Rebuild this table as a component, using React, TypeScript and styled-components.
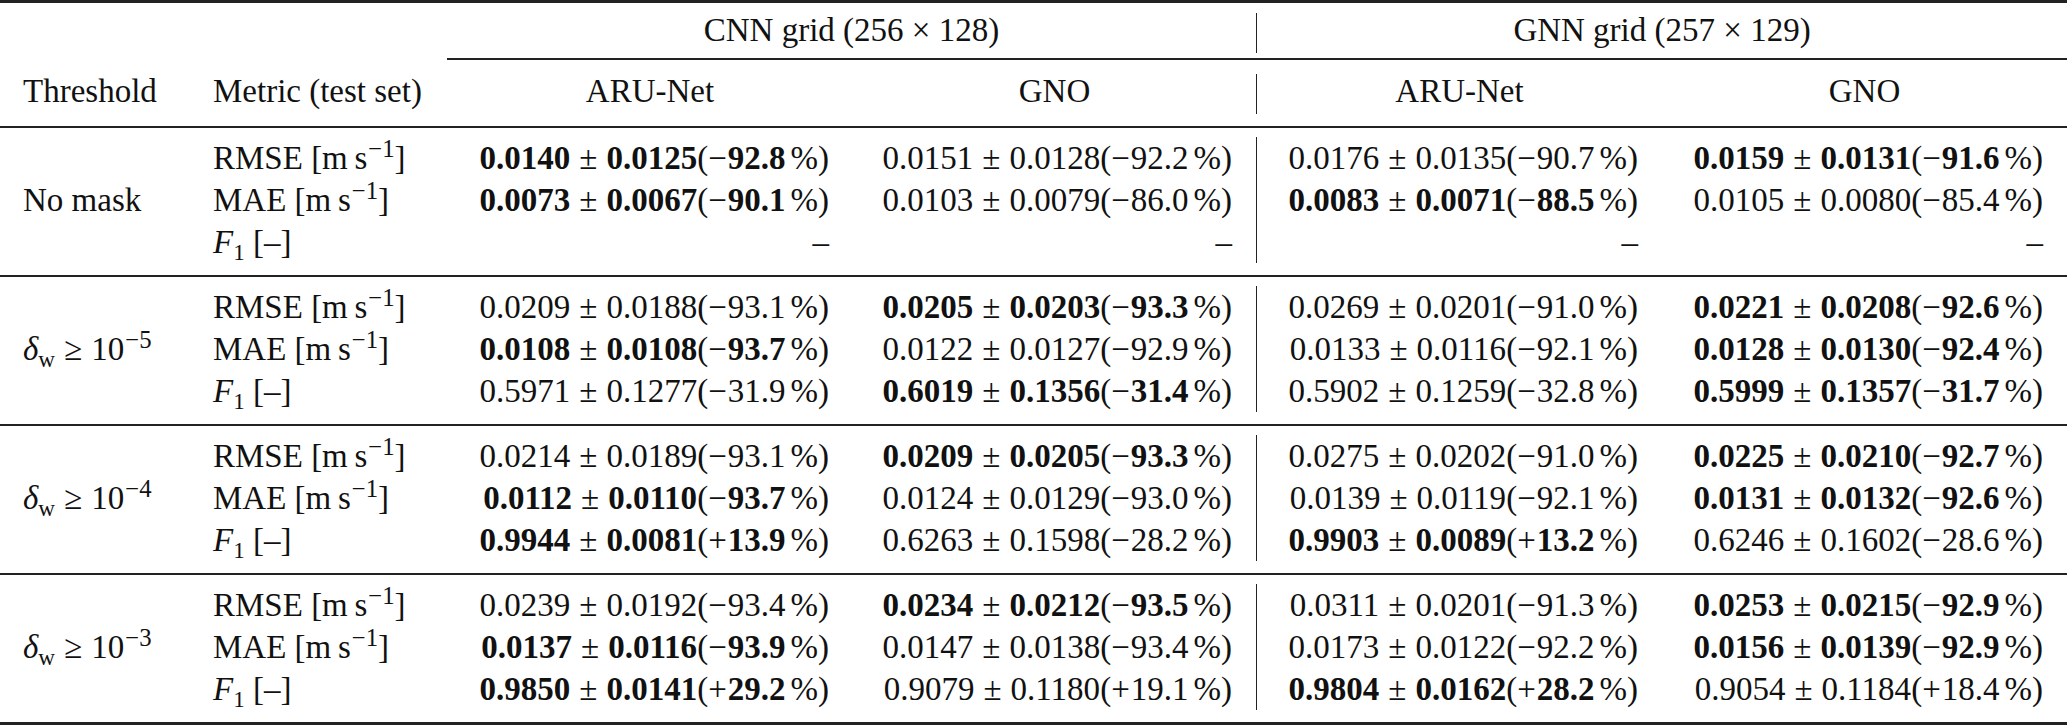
import React, { FC } from "react";
import styled, { createGlobalStyle } from "styled-components";

type Cell = [string, string, string, boolean] | null;

interface iRow {
  metric: "rmse" | "mae" | "f1";
  cells: Cell[];
}

interface iGroup {
  exp: string | null;
  rows: iRow[];
}

const COLS = "190px 257px 406px 403px 406px 405px";

const groups: iGroup[] = [
  {
    exp: null,
    rows: [
      {
        metric: "rmse",
        cells: [
          ["0.0140", "0.0125", "-92.8", true],
          ["0.0151", "0.0128", "-92.2", false],
          ["0.0176", "0.0135", "-90.7", false],
          ["0.0159", "0.0131", "-91.6", true],
        ],
      },
      {
        metric: "mae",
        cells: [
          ["0.0073", "0.0067", "-90.1", true],
          ["0.0103", "0.0079", "-86.0", false],
          ["0.0083", "0.0071", "-88.5", true],
          ["0.0105", "0.0080", "-85.4", false],
        ],
      },
      { metric: "f1", cells: [null, null, null, null] },
    ],
  },
  {
    exp: "5",
    rows: [
      {
        metric: "rmse",
        cells: [
          ["0.0209", "0.0188", "-93.1", false],
          ["0.0205", "0.0203", "-93.3", true],
          ["0.0269", "0.0201", "-91.0", false],
          ["0.0221", "0.0208", "-92.6", true],
        ],
      },
      {
        metric: "mae",
        cells: [
          ["0.0108", "0.0108", "-93.7", true],
          ["0.0122", "0.0127", "-92.9", false],
          ["0.0133", "0.0116", "-92.1", false],
          ["0.0128", "0.0130", "-92.4", true],
        ],
      },
      {
        metric: "f1",
        cells: [
          ["0.5971", "0.1277", "-31.9", false],
          ["0.6019", "0.1356", "-31.4", true],
          ["0.5902", "0.1259", "-32.8", false],
          ["0.5999", "0.1357", "-31.7", true],
        ],
      },
    ],
  },
  {
    exp: "4",
    rows: [
      {
        metric: "rmse",
        cells: [
          ["0.0214", "0.0189", "-93.1", false],
          ["0.0209", "0.0205", "-93.3", true],
          ["0.0275", "0.0202", "-91.0", false],
          ["0.0225", "0.0210", "-92.7", true],
        ],
      },
      {
        metric: "mae",
        cells: [
          ["0.0112", "0.0110", "-93.7", true],
          ["0.0124", "0.0129", "-93.0", false],
          ["0.0139", "0.0119", "-92.1", false],
          ["0.0131", "0.0132", "-92.6", true],
        ],
      },
      {
        metric: "f1",
        cells: [
          ["0.9944", "0.0081", "+13.9", true],
          ["0.6263", "0.1598", "-28.2", false],
          ["0.9903", "0.0089", "+13.2", true],
          ["0.6246", "0.1602", "-28.6", false],
        ],
      },
    ],
  },
  {
    exp: "3",
    rows: [
      {
        metric: "rmse",
        cells: [
          ["0.0239", "0.0192", "-93.4", false],
          ["0.0234", "0.0212", "-93.5", true],
          ["0.0311", "0.0201", "-91.3", false],
          ["0.0253", "0.0215", "-92.9", true],
        ],
      },
      {
        metric: "mae",
        cells: [
          ["0.0137", "0.0116", "-93.9", true],
          ["0.0147", "0.0138", "-93.4", false],
          ["0.0173", "0.0122", "-92.2", false],
          ["0.0156", "0.0139", "-92.9", true],
        ],
      },
      {
        metric: "f1",
        cells: [
          ["0.9850", "0.0141", "+29.2", true],
          ["0.9079", "0.1180", "+19.1", false],
          ["0.9804", "0.0162", "+28.2", true],
          ["0.9054", "0.1184", "+18.4", false],
        ],
      },
    ],
  },
];

const Metric: FC<{ kind: iRow["metric"] }> = ({ kind }) => {
  if (kind === "f1") {
    return (
      <>
        <Ital>F</Ital>
        <Sub>1</Sub> [–]
      </>
    );
  }
  return (
    <>
      {kind === "rmse" ? "RMSE" : "MAE"} [m{"\u2009"}s<Sup>−1</Sup>]
    </>
  );
};

const Value: FC<{ cell: Cell }> = ({ cell }) => {
  if (!cell) return <>–</>;
  const [mean, std, pct, bold] = cell;
  const sign = pct[0] === "-" ? "−" : "+";
  return (
    <>
      <Num $bold={bold}>{mean}</Num>
      <Pm>±</Pm>
      <Num $bold={bold}>{std}</Num>(<Sign>{sign}</Sign>
      <Num $bold={bold}>{pct.slice(1)}</Num>
      <Pct>%</Pct>)
    </>
  );
};

const App = () => {
  return (
    <>
      <GlobalStyle />
      <Table>
        <Rule $h={3} />
        <HeadRow $pt={10} $pb={5}>
          <HeadCell />
          <HeadCell />
          <HeadCell $span={2} $center>
            CNN grid (256 × 128)
          </HeadCell>
          <HeadCell $span={2} $center $sep>
            GNN grid (257 × 129)
          </HeadCell>
        </HeadRow>
        <Rule $h={1.5} $indent={447} />
        <HeadRow $pt={14.5} $pb={12}>
          <HeadCell>Threshold</HeadCell>
          <HeadCell>Metric (test set)</HeadCell>
          <HeadCell $center>ARU-Net</HeadCell>
          <HeadCell $center>GNO</HeadCell>
          <HeadCell $center $sep>
            ARU-Net
          </HeadCell>
          <HeadCell $center>GNO</HeadCell>
        </HeadRow>
        {groups.map((g, gi) => (
          <React.Fragment key={gi}>
            <Rule $h={2} />
            <Group>
              <ThresholdCell>
                {g.exp === null ? (
                  "No mask"
                ) : (
                  <>
                    <Ital>δ</Ital>
                    <Sub>w</Sub>
                    <Rel>≥</Rel>10<Sup>−{g.exp}</Sup>
                  </>
                )}
              </ThresholdCell>
              {g.rows.map((r) => (
                <React.Fragment key={r.metric}>
                  <MetricCell>
                    <Metric kind={r.metric} />
                  </MetricCell>
                  {r.cells.map((c, ci) => (
                    <ValueCell key={ci} $sep={ci === 2}>
                      <Value cell={c} />
                    </ValueCell>
                  ))}
                </React.Fragment>
              ))}
            </Group>
          </React.Fragment>
        ))}
        <Rule $h={3} />
      </Table>
    </>
  );
};

export default App;

const GlobalStyle = createGlobalStyle`
  html, body {
    margin: 0;
    padding: 0;
    background: #ffffff;
  }
  body {
    font-family: "Liberation Serif", "Times New Roman", serif;
    color: #111111;
  }
`;

const Table = styled.div`
  width: 2067px;
  font-family: "Liberation Serif", "Times New Roman", serif;
  font-size: 33px;
  color: #111111;
`;

const Rule = styled.div<{ $h: number; $indent?: number }>`
  height: ${(p) => p.$h}px;
  margin-left: ${(p) => p.$indent ?? 0}px;
  background: #222222;
`;

const HeadRow = styled.div<{ $pt: number; $pb: number }>`
  display: grid;
  grid-template-columns: ${COLS};
  padding: ${(p) => p.$pt}px 0 ${(p) => p.$pb}px;
`;

const HeadCell = styled.div<{ $span?: number; $center?: boolean; $sep?: boolean }>`
  grid-column: span ${(p) => p.$span ?? 1};
  height: 40px;
  line-height: 34px;
  white-space: nowrap;
  text-align: ${(p) => (p.$center ? "center" : "left")};
  padding: ${(p) => (p.$center ? "0 24px" : "0 0 0 23px")};
  border-left: ${(p) => (p.$sep ? "1.5px solid #222222" : "none")};
`;

const Group = styled.div`
  display: grid;
  grid-template-columns: ${COLS};
  grid-template-rows: repeat(3, 42px);
  padding: 9px 0 12px;
  line-height: 42px;
`;

const ThresholdCell = styled.div`
  grid-column: 1;
  grid-row: 1 / 4;
  align-self: center;
  padding-left: 23px;
  white-space: nowrap;
`;

const MetricCell = styled.div`
  padding-left: 23px;
  white-space: nowrap;
`;

const ValueCell = styled.div<{ $sep?: boolean }>`
  text-align: right;
  padding-right: 24px;
  white-space: nowrap;
  border-left: ${(p) => (p.$sep ? "1.5px solid #222222" : "none")};
`;

const Num = styled.span<{ $bold?: boolean }>`
  font-weight: ${(p) => (p.$bold ? 700 : 400)};
`;

const Pm = styled.span`
  margin: 0 9px;
`;

const Sign = styled.span`
  margin-right: 1px;
`;

const Pct = styled.span`
  margin-left: 5px;
`;

const Rel = styled.span`
  margin: 0 9px;
`;

const Ital = styled.span`
  font-style: italic;
`;

const Sup = styled.span`
  font-size: 0.75em;
  line-height: 0;
  vertical-align: 0.5em;
  margin-left: 1px;
`;

const Sub = styled.span`
  font-size: 0.7em;
  line-height: 0;
  vertical-align: -0.3em;
`;
